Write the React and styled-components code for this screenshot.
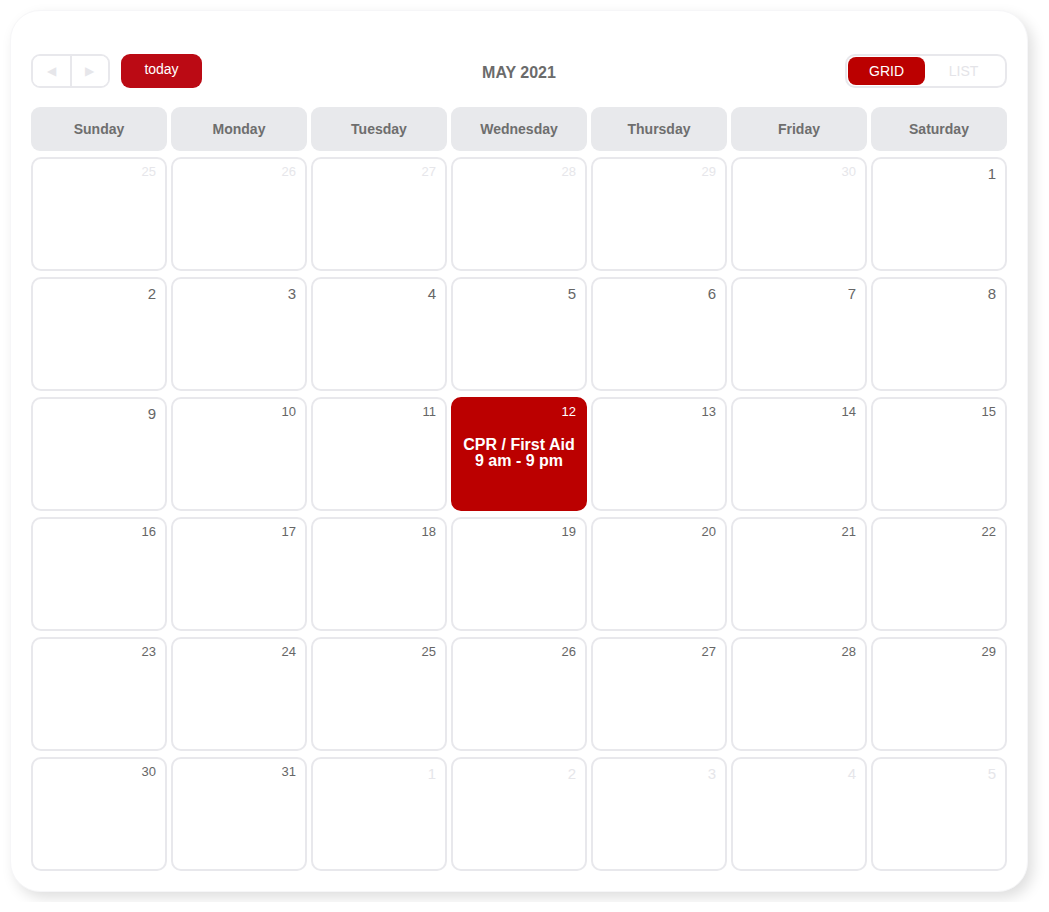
import React from 'react';
import styled, { createGlobalStyle } from 'styled-components';

const GlobalStyle = createGlobalStyle`
    body {
        margin: 0;
        background: #ffffff;
        font-family: "Liberation Sans", Arial, sans-serif;
    }
`;

const Card = styled.div`
    width: 1018px;
    height: 882px;
    box-sizing: border-box;
    margin: 10px;
    padding: 43px 20px 0 20px;
    background: #ffffff;
    border-radius: 30px;
    border: 1px solid #f6f6f8;
    box-shadow: 5px 6px 14px rgba(0, 0, 0, 0.13);
`;

const Toolbar = styled.div`
    display: grid;
    grid-template-columns: 1fr auto 1fr;
    align-items: center;
    height: 34px;
    margin-bottom: 19px;
`;

const Left = styled.div`
    display: flex;
    align-items: center;
    gap: 11px;
`;

const NavGroup = styled.div`
    display: flex;
    width: 79px;
    height: 34px;
    box-sizing: border-box;
    border: 2px solid #e8e8ec;
    border-radius: 9px;
    overflow: hidden;
`;

const NavButton = styled.button`
    flex: 1;
    display: flex;
    align-items: center;
    justify-content: center;
    padding: 0;
    border: none;
    border-left: ${(p) => (p.$divider ? '2px solid #e8e8ec' : 'none')};
    background: #ffffff;
    color: #e6e6ea;
    font-size: 12px;
`;

const TodayButton = styled.button`
    width: 81px;
    height: 34px;
    border: none;
    border-radius: 9px;
    background: #bb0a14;
    color: #ffffff;
    font-family: "Liberation Sans", Arial, sans-serif;
    font-size: 14px;
    padding: 0 0 4px 0;
`;

const Title = styled.h2`
    margin: 0;
    font-size: 16px;
    font-weight: bold;
    color: #6b6b6b;
    padding-top: 3px;
`;

const Toggle = styled.div`
    justify-self: end;
    display: flex;
    width: 162px;
    height: 34px;
    box-sizing: border-box;
    padding: 1px;
    border: 2px solid #e8e8ec;
    border-radius: 10px;
`;

const ToggleOption = styled.div`
    width: 77px;
    display: flex;
    align-items: center;
    justify-content: center;
    border-radius: 8px;
    font-size: 14px;
    background: ${(p) => (p.$active ? '#bb0000' : 'transparent')};
    color: ${(p) => (p.$active ? '#ffffff' : '#e4e4e8')};
`;

const Grid = styled.div`
    display: grid;
    grid-template-columns: repeat(7, 136px);
    grid-template-rows: 44px repeat(6, 114px);
    column-gap: 4px;
    row-gap: 6px;
`;

const DayName = styled.div`
    display: flex;
    align-items: center;
    justify-content: center;
    background: #e8e9ec;
    border-radius: 9px;
    font-size: 14px;
    font-weight: bold;
    color: #6e6e6e;
`;

const Cell = styled.div`
    box-sizing: border-box;
    border: 2px solid ${(p) => (p.$event ? '#bb0000' : '#e8e8ec')};
    border-radius: 10px;
    background: ${(p) => (p.$event ? '#bb0000' : '#ffffff')};
    display: flex;
    flex-direction: column;
    align-items: flex-end;
    padding: 0 9px 0 0;
`;

const DayNumber = styled.span`
    font-size: ${(p) => (p.$short ? '15px' : '13px')};
    line-height: 1;
    margin-top: ${(p) => (p.$short ? '7px' : '6px')};
    color: ${(p) => (p.$event ? '#ffffff' : p.$muted ? '#e6e6ea' : '#666666')};
`;

const EventText = styled.div`
    align-self: stretch;
    margin: 19px -9px 0 0;
    text-align: center;
    color: #ffffff;
    font-size: 16px;
    font-weight: bold;
    line-height: 16px;
`;

const days = ['Sunday', 'Monday', 'Tuesday', 'Wednesday', 'Thursday', 'Friday', 'Saturday'];

const cells = [];
for (let d = 25; d <= 30; d++) cells.push({ n: d, muted: true });
for (let d = 1; d <= 31; d++) cells.push({ n: d });
for (let d = 1; d <= 5; d++) cells.push({ n: d, muted: true });

const App = () => {
    return (
        <>
            <GlobalStyle />
            <Card>
                <Toolbar>
                    <Left>
                        <NavGroup>
                            <NavButton>◀</NavButton>
                            <NavButton $divider>▶</NavButton>
                        </NavGroup>
                        <TodayButton>today</TodayButton>
                    </Left>
                    <Title>MAY 2021</Title>
                    <Toggle>
                        <ToggleOption $active>GRID</ToggleOption>
                        <ToggleOption>LIST</ToggleOption>
                    </Toggle>
                </Toolbar>
                <Grid>
                    {days.map((d) => (
                        <DayName key={d}>{d}</DayName>
                    ))}
                    {cells.map((c, i) => {
                        const event = !c.muted && c.n === 12;
                        return (
                            <Cell key={i} $event={event}>
                                <DayNumber $short={c.n < 10} $muted={c.muted} $event={event}>
                                    {c.n}
                                </DayNumber>
                                {event && (
                                    <EventText>
                                        CPR / First Aid
                                        <br />
                                        9 am - 9 pm
                                    </EventText>
                                )}
                            </Cell>
                        );
                    })}
                </Grid>
            </Card>
        </>
    );
};

export default App;
